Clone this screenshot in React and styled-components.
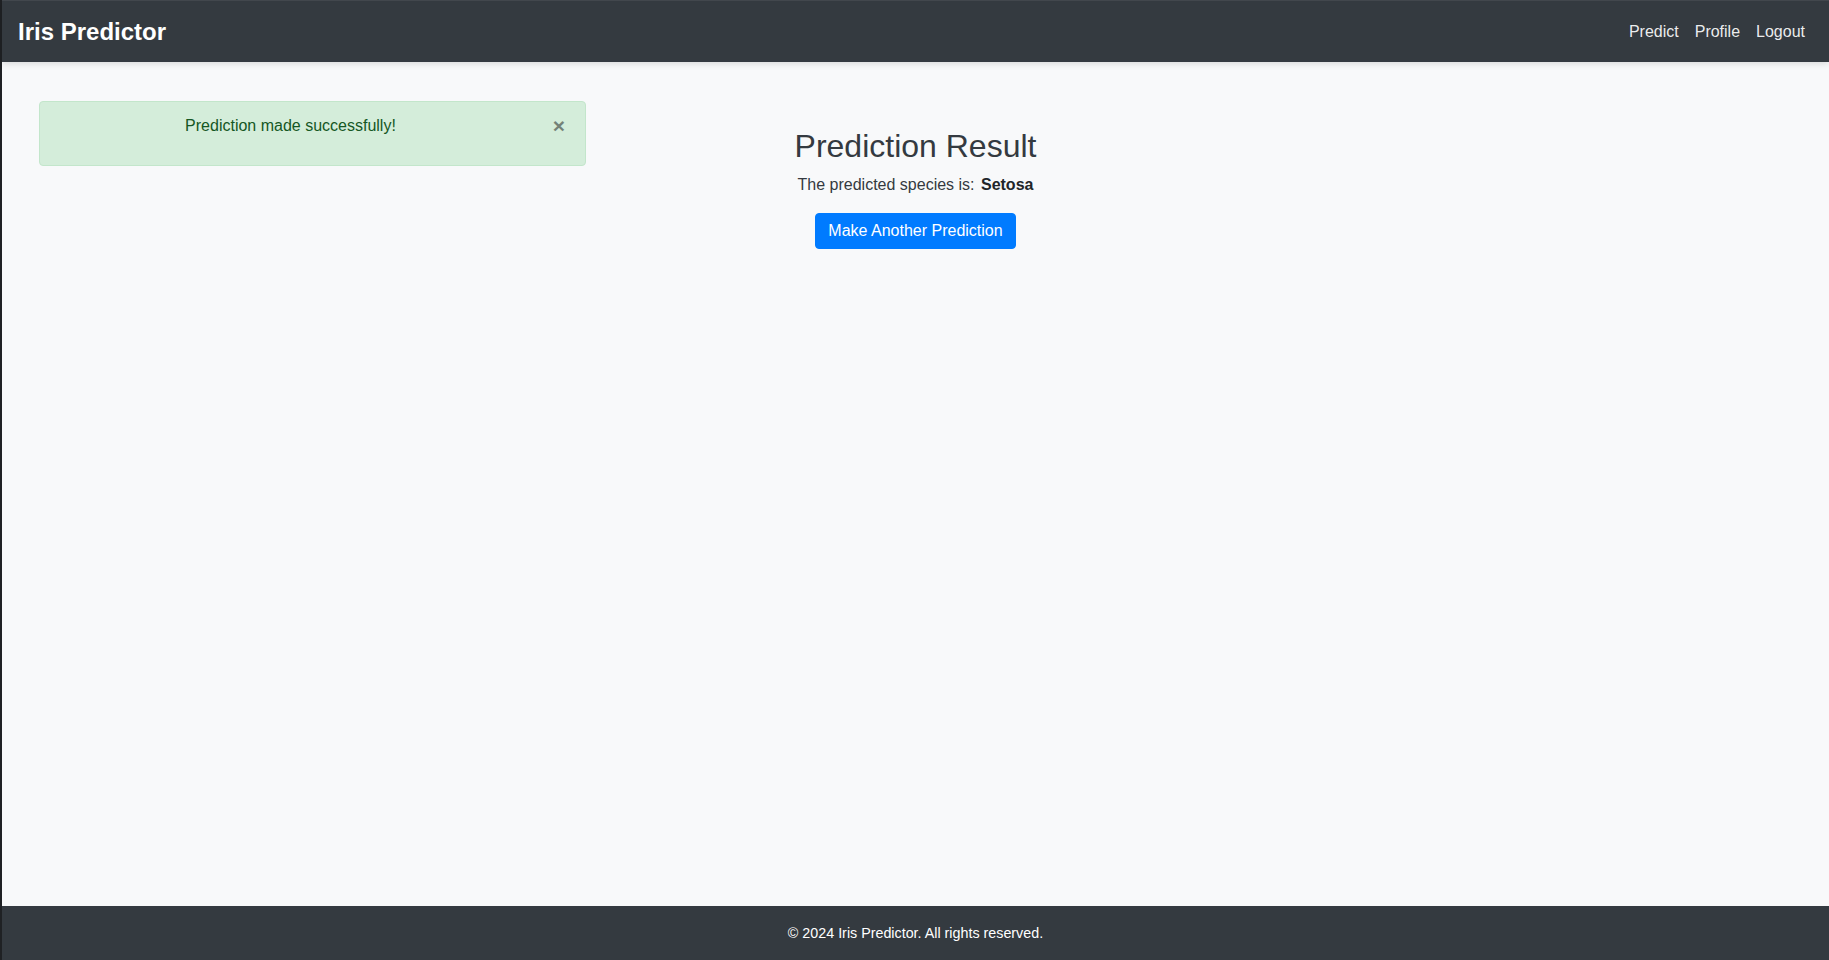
import React from 'react'
import styled, { createGlobalStyle } from 'styled-components'

const GlobalStyle = createGlobalStyle`
  * { box-sizing: border-box; }
  html, body { margin: 0; padding: 0; }
  body {
    font-family: "Liberation Sans", Arial, sans-serif;
    font-size: 16px;
    line-height: 1.5;
    color: #212529;
    background: #f8f9fa;
  }
`

const Page = styled.div`
  min-height: 100vh;
  display: flex;
  flex-direction: column;
  border-left: 2px solid #1f2124;
  background: #f8f9fa;
`

const Navbar = styled.nav`
  height: 62px;
  display: flex;
  align-items: center;
  justify-content: space-between;
  padding: 0 16px;
  background: #343a40;
  border-top: 1px solid #42474d;
  box-shadow: 0 2px 6px rgba(0, 0, 0, 0.12);
  position: relative;
  z-index: 2;
`

const Brand = styled.a`
  font-size: 24px;
  font-weight: 700;
  color: #fff;
  text-decoration: none;
  line-height: 1;
`

const NavLinks = styled.ul`
  display: flex;
  list-style: none;
  margin: 0;
  padding: 0;
`

const NavLink = styled.a`
  display: block;
  padding: 0 8px;
  font-size: 16px;
  color: rgba(255, 255, 255, 0.92);
  text-decoration: none;
`

const Main = styled.main`
  flex: 1;
  display: grid;
  grid-template-columns: 1fr auto 1fr;
  align-items: start;
  padding: 39px 37px;
`

const Alert = styled.div`
  position: relative;
  width: 547px;
  padding: 12px 64px 12px 20px;
  background: #d4edda;
  border: 1px solid #c3e6cb;
  border-radius: 4px;
  color: #155724;
  text-align: center;

  p {
    margin: 0 0 15px;
  }
`

const Close = styled.button`
  position: absolute;
  top: 0;
  right: 0;
  padding: 12px 20px;
  border: 0;
  background: transparent;
  font-family: "Liberation Sans", Arial, sans-serif;
  font-size: 21px;
  font-weight: 700;
  line-height: 24px;
  color: #000;
  opacity: 0.45;
  cursor: pointer;
`

const Result = styled.section`
  margin-top: 26px;
  text-align: center;
`

const Title = styled.h2`
  margin: 0 0 8px;
  font-size: 32px;
  font-weight: 400;
  line-height: 1.2;
  color: #343a40;
`

const Species = styled.p`
  margin: 0 0 16px;
  color: #343a40;

  strong {
    margin-left: 2px;
    font-weight: 700;
    color: #212529;
  }
`

const Button = styled.button`
  height: 36px;
  padding: 0 12px;
  border: 1px solid #007bff;
  border-radius: 4px;
  background: #007bff;
  color: #fff;
  font-family: "Liberation Sans", Arial, sans-serif;
  font-size: 16px;
  line-height: 24px;
  cursor: pointer;
`

const Footer = styled.footer`
  padding: 15px 0;
  background: #343a40;
  color: #fff;
  text-align: center;
  font-size: 14.3px;
  line-height: 24px;
`

const App = () => {
  return (
    <>
      <GlobalStyle />
      <Page>
        <Navbar>
          <Brand href="#">Iris Predictor</Brand>
          <NavLinks>
            <li><NavLink href="#">Predict</NavLink></li>
            <li><NavLink href="#">Profile</NavLink></li>
            <li><NavLink href="#">Logout</NavLink></li>
          </NavLinks>
        </Navbar>

        <Main>
          <Alert role="alert">
            <p>Prediction made successfully!</p>
            <Close aria-label="Close">&times;</Close>
          </Alert>

          <Result>
            <Title>Prediction Result</Title>
            <Species>The predicted species is: <strong>Setosa</strong></Species>
            <Button>Make Another Prediction</Button>
          </Result>
        </Main>

        <Footer>&copy; 2024 Iris Predictor. All rights reserved.</Footer>
      </Page>
    </>
  )
}

export default App
